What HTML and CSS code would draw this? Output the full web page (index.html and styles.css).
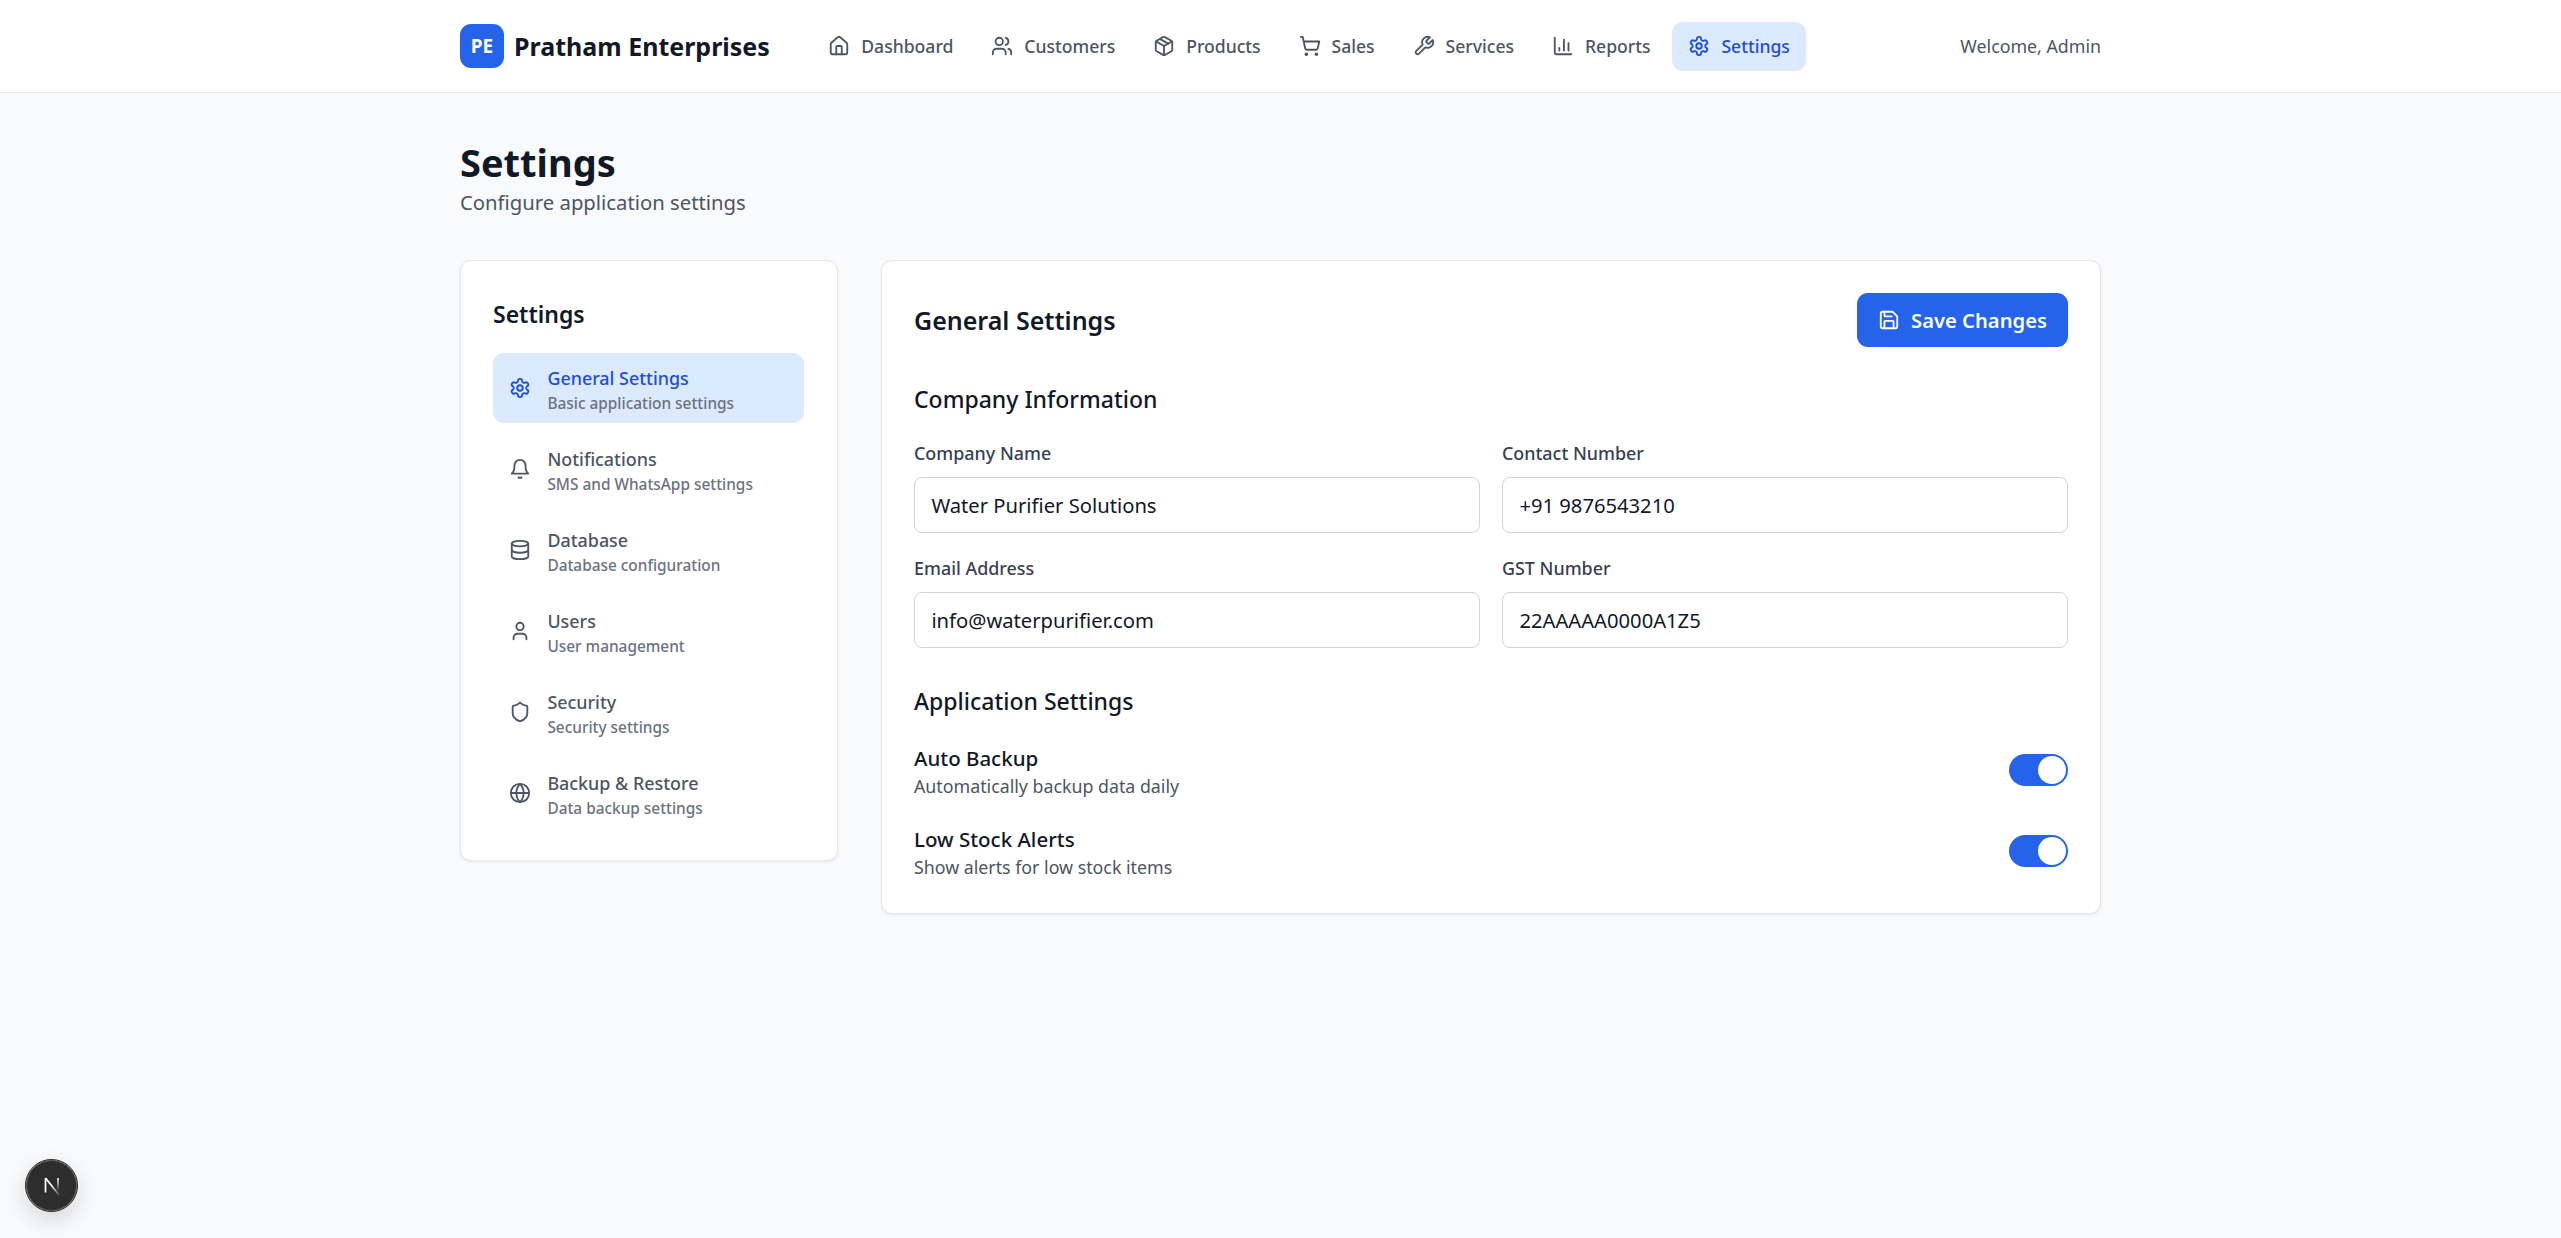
FILE: index.html
```html
<!DOCTYPE html>
<html lang="en">
<head>
<meta charset="utf-8">
<title>Settings</title>
<link rel="stylesheet" href="styles.css">
</head>
<body>
<svg class="sprite" xmlns="http://www.w3.org/2000/svg">
<symbol id="i-home" viewBox="0 0 24 24"><path d="M15 21v-8a1 1 0 0 0-1-1h-4a1 1 0 0 0-1 1v8"/><path d="M3 10a2 2 0 0 1 .709-1.528l7-5.999a2 2 0 0 1 2.582 0l7 5.999A2 2 0 0 1 21 10v9a2 2 0 0 1-2 2H5a2 2 0 0 1-2-2z"/></symbol>
<symbol id="i-users" viewBox="0 0 24 24"><path d="M16 21v-2a4 4 0 0 0-4-4H6a4 4 0 0 0-4 4v2"/><circle cx="9" cy="7" r="4"/><path d="M22 21v-2a4 4 0 0 0-3-3.87"/><path d="M16 3.13a4 4 0 0 1 0 7.75"/></symbol>
<symbol id="i-package" viewBox="0 0 24 24"><path d="m7.5 4.27 9 5.15"/><path d="M21 8a2 2 0 0 0-1-1.73l-7-4a2 2 0 0 0-2 0l-7 4A2 2 0 0 0 3 8v8a2 2 0 0 0 1 1.73l7 4a2 2 0 0 0 2 0l7-4A2 2 0 0 0 21 16Z"/><path d="m3.3 7 8.7 5 8.7-5"/><path d="M12 22V12"/></symbol>
<symbol id="i-cart" viewBox="0 0 24 24"><circle cx="8" cy="21" r="1"/><circle cx="19" cy="21" r="1"/><path d="M2.05 2.05h2l2.66 12.42a2 2 0 0 0 2 1.58h9.78a2 2 0 0 0 1.95-1.57l1.65-7.43H5.12"/></symbol>
<symbol id="i-wrench" viewBox="0 0 24 24"><path d="M14.7 6.3a1 1 0 0 0 0 1.4l1.6 1.6a1 1 0 0 0 1.4 0l3.77-3.77a6 6 0 0 1-7.94 7.94l-6.91 6.91a2.12 2.12 0 0 1-3-3l6.91-6.91a6 6 0 0 1 7.94-7.94l-3.76 3.76z"/></symbol>
<symbol id="i-chart" viewBox="0 0 24 24"><path d="M3 3v16a2 2 0 0 0 2 2h16"/><path d="M18 17V9"/><path d="M13 17V5"/><path d="M8 17v-3"/></symbol>
<symbol id="i-gear" viewBox="0 0 24 24"><path d="M12.22 2h-.44a2 2 0 0 0-2 2v.18a2 2 0 0 1-1 1.73l-.43.25a2 2 0 0 1-2 0l-.15-.08a2 2 0 0 0-2.73.73l-.22.38a2 2 0 0 0 .73 2.73l.15.1a2 2 0 0 1 1 1.72v.51a2 2 0 0 1-1 1.74l-.15.09a2 2 0 0 0-.73 2.73l.22.38a2 2 0 0 0 2.73.73l.15-.08a2 2 0 0 1 2 0l.43.25a2 2 0 0 1 1 1.73V20a2 2 0 0 0 2 2h.44a2 2 0 0 0 2-2v-.18a2 2 0 0 1 1-1.73l.43-.25a2 2 0 0 1 2 0l.15.08a2 2 0 0 0 2.73-.73l.22-.39a2 2 0 0 0-.73-2.73l-.15-.08a2 2 0 0 1-1-1.74v-.5a2 2 0 0 1 1-1.74l.15-.09a2 2 0 0 0 .73-2.73l-.22-.38a2 2 0 0 0-2.73-.73l-.15.08a2 2 0 0 1-2 0l-.43-.25a2 2 0 0 1-1-1.73V4a2 2 0 0 0-2-2z"/><circle cx="12" cy="12" r="3"/></symbol>
<symbol id="i-bell" viewBox="0 0 24 24"><path d="M6 8a6 6 0 0 1 12 0c0 7 3 9 3 9H3s3-2 3-9"/><path d="M10.3 21a1.94 1.94 0 0 0 3.4 0"/></symbol>
<symbol id="i-db" viewBox="0 0 24 24"><ellipse cx="12" cy="5" rx="9" ry="3"/><path d="M3 5V19A9 3 0 0 0 21 19V5"/><path d="M3 12A9 3 0 0 0 21 12"/></symbol>
<symbol id="i-user" viewBox="0 0 24 24"><path d="M19 21v-2a4 4 0 0 0-4-4H9a4 4 0 0 0-4 4v2"/><circle cx="12" cy="7" r="4"/></symbol>
<symbol id="i-shield" viewBox="0 0 24 24"><path d="M20 13c0 5-3.5 7.5-7.66 8.95a1 1 0 0 1-.67-.01C7.5 20.5 4 18 4 13V6a1 1 0 0 1 1-1c2 0 4.5-1.2 6.24-2.72a1.17 1.17 0 0 1 1.52 0C14.51 3.81 17 5 19 5a1 1 0 0 1 1 1z"/></symbol>
<symbol id="i-globe" viewBox="0 0 24 24"><circle cx="12" cy="12" r="10"/><path d="M12 2a14.5 14.5 0 0 0 0 20 14.5 14.5 0 0 0 0-20"/><path d="M2 12h20"/></symbol>
<symbol id="i-save" viewBox="0 0 24 24"><path d="M15.2 3a2 2 0 0 1 1.4.6l3.8 3.8a2 2 0 0 1 .6 1.4V19a2 2 0 0 1-2 2H5a2 2 0 0 1-2-2V5a2 2 0 0 1 2-2z"/><path d="M17 21v-7a1 1 0 0 0-1-1H8a1 1 0 0 0-1 1v7"/><path d="M7 3v4a1 1 0 0 0 1 1h7"/></symbol>
</svg>

<header class="topbar">
  <div class="wrap topbar-inner">
    <div class="brand"><span class="brand-mark">PE</span><span class="brand-name">Pratham Enterprises</span></div>
    <nav class="nav">
      <a class="nav-link"><svg class="icon"><use href="#i-home"/></svg>Dashboard</a>
      <a class="nav-link"><svg class="icon"><use href="#i-users"/></svg>Customers</a>
      <a class="nav-link"><svg class="icon"><use href="#i-package"/></svg>Products</a>
      <a class="nav-link"><svg class="icon"><use href="#i-cart"/></svg>Sales</a>
      <a class="nav-link"><svg class="icon"><use href="#i-wrench"/></svg>Services</a>
      <a class="nav-link"><svg class="icon"><use href="#i-chart"/></svg>Reports</a>
      <a class="nav-link is-active"><svg class="icon"><use href="#i-gear"/></svg>Settings</a>
    </nav>
    <div class="welcome">Welcome, Admin</div>
  </div>
</header>

<main class="wrap page">
  <h1 class="page-title">Settings</h1>
  <p class="page-sub">Configure application settings</p>

  <div class="layout">
    <aside class="card side">
      <h2 class="side-title">Settings</h2>
      <ul class="side-list">
        <li class="side-item is-active"><svg class="icon"><use href="#i-gear"/></svg><div class="side-text"><div class="side-name">General Settings</div><div class="side-desc">Basic application settings</div></div></li>
        <li class="side-item"><svg class="icon"><use href="#i-bell"/></svg><div class="side-text"><div class="side-name">Notifications</div><div class="side-desc">SMS and WhatsApp settings</div></div></li>
        <li class="side-item"><svg class="icon"><use href="#i-db"/></svg><div class="side-text"><div class="side-name">Database</div><div class="side-desc">Database configuration</div></div></li>
        <li class="side-item"><svg class="icon"><use href="#i-user"/></svg><div class="side-text"><div class="side-name">Users</div><div class="side-desc">User management</div></div></li>
        <li class="side-item"><svg class="icon"><use href="#i-shield"/></svg><div class="side-text"><div class="side-name">Security</div><div class="side-desc">Security settings</div></div></li>
        <li class="side-item"><svg class="icon"><use href="#i-globe"/></svg><div class="side-text"><div class="side-name">Backup &amp; Restore</div><div class="side-desc">Data backup settings</div></div></li>
      </ul>
    </aside>

    <section class="card content">
      <div class="content-head">
        <h2 class="content-title">General Settings</h2>
        <button class="save" type="button"><svg class="icon"><use href="#i-save"/></svg>Save Changes</button>
      </div>

      <h3 class="group-title">Company Information</h3>
      <div class="form-grid">
        <label class="field"><span class="field-label">Company Name</span><input class="field-input" value="Water Purifier Solutions"></label>
        <label class="field"><span class="field-label">Contact Number</span><input class="field-input" value="+91 9876543210"></label>
        <label class="field"><span class="field-label">Email Address</span><input class="field-input" value="info@waterpurifier.com"></label>
        <label class="field"><span class="field-label">GST Number</span><input class="field-input" value="22AAAAA0000A1Z5"></label>
      </div>

      <h3 class="group-title group-two">Application Settings</h3>
      <div class="toggles">
        <div class="toggle-row"><div class="toggle-text"><div class="toggle-name">Auto Backup</div><div class="toggle-desc">Automatically backup data daily</div></div><span class="toggle"></span></div>
        <div class="toggle-row"><div class="toggle-text"><div class="toggle-name">Low Stock Alerts</div><div class="toggle-desc">Show alerts for low stock items</div></div><span class="toggle"></span></div>
      </div>
    </section>
  </div>
</main>

<div class="dev-badge">
  <svg viewBox="0 0 24 24" width="24" height="24" fill="none"><defs><linearGradient id="n-a" gradientUnits="userSpaceOnUse" x1="5" y1="4" x2="19" y2="21"><stop offset="0.45" stop-color="#fff"/><stop offset="1" stop-color="#fff" stop-opacity="0.15"/></linearGradient><linearGradient id="n-b" gradientUnits="userSpaceOnUse" x1="18" y1="4" x2="18" y2="17"><stop offset="0" stop-color="#fff"/><stop offset="1" stop-color="#fff" stop-opacity="0"/></linearGradient></defs><path d="M5.5 4v14.5" stroke="#fff" stroke-width="1.7"/><path d="M5.5 4 19 21" stroke="url(#n-a)" stroke-width="1.8"/><path d="M18 4v13" stroke="url(#n-b)" stroke-width="1.7"/></svg>
</div>
</body>
</html>
```
FILE: styles.css
```css
* { box-sizing: border-box; }
html, body { margin: 0; padding: 0; }
body {
  min-height: 100vh;
  background: #f9fafb;
  color: #111827;
  font-family: "Noto Sans", "Open Sans", sans-serif;
}
.sprite { position: absolute; width: 0; height: 0; overflow: hidden; }
.icon {
  width: 22px; height: 22px; flex: none;
  fill: none; stroke: currentColor; stroke-width: 2;
  stroke-linecap: round; stroke-linejoin: round;
}
.wrap { width: 1641px; margin: 0 auto; }

.topbar { height: 93px; background: #fff; border-bottom: 1px solid #e5e7eb; }
.topbar-inner { height: 92px; display: flex; align-items: center; }
.brand { display: flex; align-items: center; gap: 10px; }
.brand-mark {
  width: 44px; height: 44px; border-radius: 11px; background: #2563eb; color: #fff;
  font-weight: 700; font-size: 19px; display: flex; align-items: center; justify-content: center;
}
.brand-name { font-size: 25px; font-weight: 700; color: #111827; }
.nav { display: flex; gap: 5.1px; margin-left: 42px; }
.nav-link {
  height: 49px; padding: 0 16.4px; display: flex; align-items: center; gap: 11px;
  border-radius: 11px; font-size: 17.6px; font-weight: 500; color: #4b5563;
}
.nav-link.is-active { background: #dbeafe; color: #1d4ed8; }
.welcome { margin-left: auto; font-size: 17.8px; color: #4b5563; }

.page { padding-top: 47px; }
.page-title { margin: 0; font-size: 38px; line-height: 1.2; font-weight: 700; color: #111827; }
.page-sub { margin: 2px 0 0; font-size: 20.3px; line-height: 28px; color: #4b5563; }
.layout { display: grid; grid-template-columns: 378px 1220px; column-gap: 43px; align-items: start; margin-top: 44px; }

.card {
  background: #fff; border: 1px solid #e5e7eb; border-radius: 11px;
  box-shadow: 0 1px 3px rgba(0,0,0,0.08); padding: 32px;
}
.side { padding-right: 33px; }
.side-title { margin: 0 0 17px; font-size: 23px; line-height: 43px; font-weight: 600; color: #111827; }
.side-list { list-style: none; margin: 0; padding: 0; display: flex; flex-direction: column; gap: 11px; }
.side-item {
  height: 70px; padding: 0 16.4px; display: flex; align-items: center; gap: 16px;
  border-radius: 11px; color: #4b5563;
}
.side-item .icon { color: #4b5563; }
.side-item.is-active { background: #dbeafe; color: #1d4ed8; }
.side-item.is-active .icon { color: #1d4ed8; }
.side-text { padding-top: 6px; }
.side-name { font-size: 17.9px; line-height: 25px; font-weight: 500; }
.side-desc { margin-top: 2px; font-size: 15.4px; line-height: 22px; font-weight: 500; color: #6b7280; }

.content-head { display: flex; align-items: center; justify-content: space-between; height: 54px; }
.content-title { margin: 0; font-size: 25px; font-weight: 600; color: #111827; }
.save {
  height: 54px; width: 211px; border: 0; border-radius: 11px; background: #2563eb; color: #fff;
  display: flex; align-items: center; justify-content: center; gap: 11px;
  font: 600 20.2px "Noto Sans", sans-serif;
}
.group-title { margin: 36px 0 0; font-size: 23px; line-height: 33px; font-weight: 500; color: #111827; }
.group-two { margin-top: 37px; }
.form-grid { display: grid; grid-template-columns: 1fr 1fr; gap: 22px; margin-top: 24px; }
.field { display: block; }
.field-label { display: block; font-size: 17.9px; line-height: 26px; font-weight: 500; color: #374151; margin-bottom: 11px; }
.field-input {
  display: block; width: 100%; height: 56px; padding: 0 16.4px;
  border: 1px solid #d1d5db; border-radius: 8px; background: #fff; color: #111827;
  font: 400 20.2px "Noto Sans", sans-serif; outline: none;
}
.toggles { margin: 24px 0 2px; display: flex; flex-direction: column; gap: 25px; }
.toggle-row { display: flex; align-items: center; justify-content: space-between; height: 56px; }
.toggle-text { padding-top: 5px; }
.toggle-name { font-size: 20.5px; line-height: 28px; font-weight: 500; color: #111827; }
.toggle-desc { font-size: 17.8px; line-height: 29px; color: #4b5563; }
.toggle { position: relative; width: 59px; height: 32px; border-radius: 16px; background: #2563eb; }
.toggle::after {
  content: ""; position: absolute; top: 2px; right: 2px; width: 28px; height: 28px;
  border-radius: 50%; background: #fff;
}

.dev-badge {
  position: fixed; left: 26px; bottom: 27px; width: 51px; height: 51px; border-radius: 50%;
  background: #2d2d2d; border: 1px solid #555; outline: 1px solid #1a1a1a;
  box-shadow: 0 8px 24px rgba(0,0,0,0.16);
  display: flex; align-items: center; justify-content: center;
}
```
